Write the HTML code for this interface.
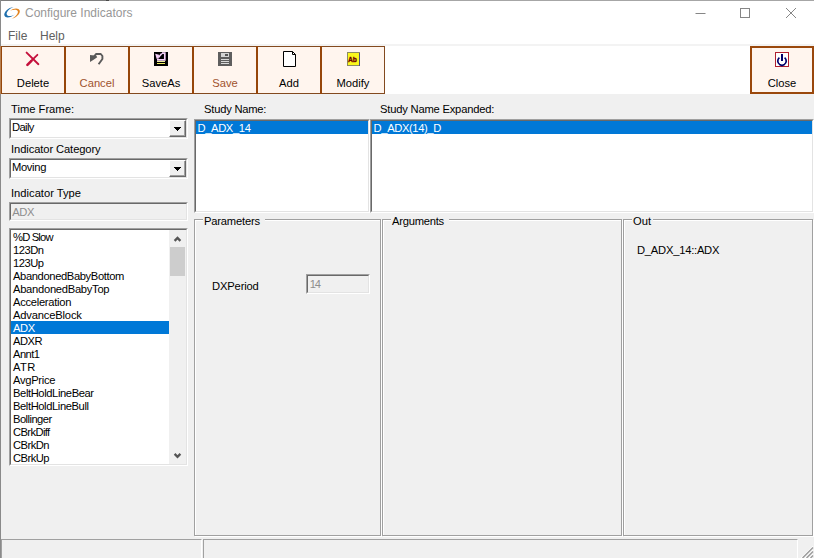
<!DOCTYPE html>
<html>
<head>
<meta charset="utf-8">
<title>Configure Indicators</title>
<style>
*{box-sizing:border-box;margin:0;padding:0}
html,body{width:814px;height:558px;overflow:hidden;background:#f0f0f0}
body{position:relative;font-family:"Liberation Sans",sans-serif;font-size:11.2px;color:#000}
.abs{position:absolute}
.t{position:absolute;white-space:nowrap;line-height:13px;height:13px}
#topb{left:0;top:0;width:814px;height:1px;background:linear-gradient(to right,#7c7c7c 0,#7c7c7c 106px,#484848 106px,#484848 109px,#a6a6a6 109px)}
#leftb{left:0;top:0;width:1px;height:558px;background:#8a8a8a}
#title{left:1px;top:1px;width:813px;height:26px;background:#fff}
#menu{left:1px;top:27px;width:813px;height:19px;background:#fff}
#tbar{left:1px;top:44px;width:813px;height:50px;background:#fff;border-top:2px solid #f3f3f3}
.tb{position:absolute;top:46px;width:64px;height:48px;background:#fff5ee;border:1px solid #834a1f}
.tb .lbl{position:absolute;left:0;width:62px;top:30px;text-align:center;line-height:13px}
.dis{color:#a0522d}
.sunk{position:absolute;background:#fff;border:1px solid;border-color:#a0a0a0 #fff #fff #a0a0a0}
.sunk>.in{position:absolute;left:0;top:0;right:0;bottom:0;border:1px solid;border-color:#696969 #e3e3e3 #e3e3e3 #696969}
.sel{position:absolute;background:#0078d7}
.grp{position:absolute;border:1px solid #a0a0a0;box-shadow:inset 1px 1px 0 #fff, 1px 1px 0 #fff}
.cap{position:absolute;top:215px;background:#f0f0f0;line-height:13px;height:13px;padding:0 2px 0 1px;white-space:nowrap}
.cbtn{position:absolute;width:17px;height:17px;background:#f0f0f0;border:1px solid;border-color:#fff #696969 #696969 #fff;box-shadow:inset -1px -1px 0 #a0a0a0, inset 1px 1px 0 #f0f0f0}
.cbtn i{position:absolute;left:7px;top:9px;width:1px;height:1px;background:#000;box-shadow:0 -1px 0 #000,-1px -1px 0 #000,1px -1px 0 #000,0 -2px 0 #000,-1px -2px 0 #000,1px -2px 0 #000,-2px -2px 0 #000,2px -2px 0 #000,0 -3px 0 #000,-1px -3px 0 #000,1px -3px 0 #000,-2px -3px 0 #000,2px -3px 0 #000,-3px -3px 0 #000,3px -3px 0 #000}
</style>
</head>
<body>
<div class="abs" id="title"></div>
<div class="abs" id="menu"></div>
<div class="abs" id="tbar"></div>
<div class="abs" id="topb"></div>
<div class="abs" id="leftb"></div>

<!-- title icon -->
<svg class="abs" style="left:0;top:0" width="24" height="24" viewBox="0 0 24 24">
  <path d="M13.6 7.0 C8.4 7.6 3.4 12.2 4.4 15.6 C5.4 18.4 10.4 18.0 14.8 14.4 C11.2 16.6 7.8 16.7 6.8 14.6 C5.9 12.3 9.2 8.8 13.6 7.0 Z" fill="#1f6fad"/>
  <path d="M10.2 10.6 C13.8 7.9 18.8 7.7 19.7 10.6 C20.5 13.7 16.5 17.6 11.6 19.1 C15 17.1 18.1 14 17.9 11.6 C17.5 9.2 14 9.2 10.2 10.6 Z" fill="#e2841f"/>
</svg>
<div class="t" style="left:25px;top:6px;font-size:12px;line-height:14px;height:14px;color:#979797">Configure Indicators</div>
<svg class="abs" style="left:690px;top:4px" width="120" height="20" viewBox="0 0 120 20">
  <path d="M5.5 9.5 H15.5" stroke="#868686" stroke-width="1" fill="none"/>
  <rect x="50.5" y="4.5" width="9" height="9" stroke="#868686" stroke-width="1" fill="none"/>
  <path d="M96 4 L106 14 M106 4 L96 14" stroke="#868686" stroke-width="1" fill="none"/>
</svg>
<div class="t" style="left:8px;top:29px;font-size:12px;line-height:14px;height:14px;color:#606060">File</div>
<div class="t" style="left:40px;top:29px;font-size:12px;line-height:14px;height:14px;color:#606060">Help</div>

<!-- toolbar -->
<div class="abs" style="left:0;top:46px;width:1px;height:48px;background:#b88050"></div>
<div class="tb" style="left:1px"><div class="lbl">Delete</div></div>
<div class="tb" style="left:65px"><div class="lbl dis">Cancel</div></div>
<div class="tb" style="left:129px"><div class="lbl">SaveAs</div></div>
<div class="tb" style="left:193px"><div class="lbl dis">Save</div></div>
<div class="tb" style="left:257px"><div class="lbl">Add</div></div>
<div class="tb" style="left:321px"><div class="lbl">Modify</div></div>
<div class="abs" style="left:64px;top:46px;width:2px;height:48px;background:#96460a"></div>
<div class="abs" style="left:128px;top:46px;width:2px;height:48px;background:#96460a"></div>
<div class="abs" style="left:192px;top:46px;width:2px;height:48px;background:#96460a"></div>
<div class="abs" style="left:256px;top:46px;width:2px;height:48px;background:#96460a"></div>
<div class="abs" style="left:320px;top:46px;width:2px;height:48px;background:#96460a"></div>
<div class="abs" style="left:1px;top:46px;width:1px;height:48px;background:#96460a"></div>
<div class="tb" style="left:750px;border:2px solid #9a480c"><div class="lbl" style="left:-1px;top:29px">Close</div></div>
<svg class="abs" style="left:0;top:46px" width="814" height="48" viewBox="0 46 814 48">
  <!-- delete X -->
  <path d="M26.6 52.6 L38.4 64.2" stroke="#c4103c" stroke-width="1.9" fill="none" stroke-linecap="round"/>
  <path d="M37.4 54.8 L31 61.2" stroke="#c4103c" stroke-width="1.8" fill="none" stroke-linecap="round"/>
  <path d="M31.4 60.8 L27.4 64.8" stroke="#c4103c" stroke-width="2.6" fill="none" stroke-linecap="round"/>
  <!-- cancel / undo -->
  <path d="M90 54.9 L90 62.1 L93.6 59.7 L97.2 57.3 L96 55.2 L94.4 55.6 Z" fill="#5a5a5a"/>
  <path d="M94 56.6 L96 54 L100.8 54 L102.4 56 L102.4 59 L98.6 64.2" stroke="#5a5a5a" stroke-width="1.9" fill="none" stroke-linejoin="round"/>
  <!-- save as -->
  <rect x="154" y="52" width="14" height="14" fill="#000"/>
  <path d="M155.2 53.8 L159 54.8 L158.6 58.8 L156.6 58.8 Z" fill="#f6d0f8"/>
  <path d="M158.4 57.6 L161.8 53.6" stroke="#f6d0f8" stroke-width="1.6" fill="none"/>
  <path d="M162 53.2 H164.8 V59.8 H157" stroke="#f6d0f8" stroke-width="1.7" fill="none"/>
  <rect x="157" y="61" width="8" height="1" fill="#ecec9c"/>
  <rect x="157" y="63" width="8" height="1" fill="#f0f060"/>
  <!-- save (disabled) -->
  <rect x="218" y="52" width="14" height="14" fill="#5e5e5e"/>
  <rect x="221" y="53" width="8" height="4" fill="#d4d4d4"/>
  <rect x="225" y="54" width="3" height="2" fill="#555"/>
  <rect x="221" y="59" width="8" height="1" fill="#d8d8d8"/>
  <rect x="221" y="61" width="8" height="1" fill="#d8d8d8"/>
  <rect x="221" y="63" width="8" height="1" fill="#d8d8d8"/>
  <!-- add -->
  <path d="M283.5 51.5 H292.5 L295.5 54.5 V66.5 H283.5 Z" fill="#fff" stroke="#000" stroke-width="1"/>
  <path d="M292.5 51.5 V54.5 H295.5" fill="none" stroke="#000" stroke-width="1"/>
  <!-- modify -->
  <rect x="347.5" y="52.5" width="12" height="13" fill="#fbf71c" stroke="#8c8c60" stroke-width="1"/>
  <rect x="359" y="53" width="1" height="13" fill="#50507a"/>
  <text x="348" y="61.8" font-family="Liberation Sans" font-weight="bold" font-size="7.8" fill="#700000" stroke="#700000" stroke-width="0.35" textLength="9" lengthAdjust="spacingAndGlyphs">Ab</text>
  <!-- close -->
  <rect x="775.5" y="52.5" width="13" height="14" fill="#fff" stroke="#b02030" stroke-width="1"/>
  <rect x="781" y="54" width="2" height="7" fill="#00006c"/>
  <path d="M779.4 57.6 C777 59.6 777.4 63 779.6 64.4 L782 65.6 L784.4 64.4 C786.6 63 787 59.6 784.6 57.6" fill="none" stroke="#00006c" stroke-width="1.7"/>
</svg>

<!-- left panel -->
<div class="t" style="left:11px;top:103px">Time Frame:</div>
<div class="sunk" style="left:9px;top:118px;width:179px;height:21px"><div class="in"></div>
  <div class="t" style="left:2px;top:2px;letter-spacing:-0.6px">Daily</div>
  <div class="cbtn" style="left:159px;top:1px"><i></i></div>
</div>
<div class="t" style="left:11px;top:143px;letter-spacing:-0.1px">Indicator Category</div>
<div class="sunk" style="left:9px;top:158px;width:179px;height:21px"><div class="in"></div>
  <div class="t" style="left:2px;top:2px;letter-spacing:-0.34px">Moving</div>
  <div class="cbtn" style="left:159px;top:1px"><i></i></div>
</div>
<div class="t" style="left:11px;top:187px">Indicator Type</div>
<div class="sunk" style="left:9px;top:202px;width:179px;height:19px;background:#f0f0f0"><div class="in"></div>
  <div class="t" style="left:2.3px;top:3px;color:#8e8e8e;letter-spacing:-0.45px">ADX</div>
</div>

<!-- indicator list -->
<div class="sunk" style="left:9px;top:228px;width:179px;height:238px"><div class="in"></div></div>
<div class="t" style="left:13px;top:231px;letter-spacing:-0.82px">%D Slow</div>
<div class="t" style="left:13px;top:244px;letter-spacing:-0.47px">123Dn</div>
<div class="t" style="left:13px;top:257px;letter-spacing:-0.47px">123Up</div>
<div class="t" style="left:13px;top:270px;letter-spacing:-0.38px">AbandonedBabyBottom</div>
<div class="t" style="left:13px;top:283px;letter-spacing:-0.28px">AbandonedBabyTop</div>
<div class="t" style="left:13px;top:296px;letter-spacing:-0.29px">Acceleration</div>
<div class="t" style="left:13px;top:309px;letter-spacing:-0.18px">AdvanceBlock</div>
<div class="sel" style="left:11px;top:321px;width:158px;height:13px"></div>
<div class="t" style="left:13px;top:322px;color:#fff;letter-spacing:-0.40px">ADX</div>
<div class="t" style="left:13px;top:335px;letter-spacing:-0.53px">ADXR</div>
<div class="t" style="left:13px;top:348px;letter-spacing:-0.55px">Annt1</div>
<div class="t" style="left:13px;top:361px;letter-spacing:0.35px">ATR</div>
<div class="t" style="left:13px;top:374px;letter-spacing:-0.31px">AvgPrice</div>
<div class="t" style="left:13px;top:387px;letter-spacing:-0.40px">BeltHoldLineBear</div>
<div class="t" style="left:13px;top:400px;letter-spacing:-0.41px">BeltHoldLineBull</div>
<div class="t" style="left:13px;top:413px;letter-spacing:-0.54px">Bollinger</div>
<div class="t" style="left:13px;top:426px;letter-spacing:-0.61px">CBrkDiff</div>
<div class="t" style="left:13px;top:439px;letter-spacing:-0.54px">CBrkDn</div>
<div class="t" style="left:13px;top:452px;letter-spacing:-0.54px">CBrkUp</div>

<div class="abs" style="left:169px;top:230px;width:17px;height:234px;background:#f0f0f0"></div>
<div class="abs" style="left:170px;top:247px;width:15px;height:29px;background:#cdcdcd"></div>
<svg class="abs" style="left:169px;top:230px" width="17" height="234" viewBox="0 0 17 234">
  <path d="M5.6 10.9 L8.5 8.0 L11.4 10.9" fill="none" stroke="#555" stroke-width="2.3"/>
  <path d="M5.6 223.9 L8.5 226.8 L11.4 223.9" fill="none" stroke="#555" stroke-width="2.3"/>
</svg>

<!-- study name -->
<div class="t" style="left:204px;top:103px;letter-spacing:-0.22px">Study Name:</div>
<div class="sunk" style="left:194px;top:119px;width:176px;height:94px"><div class="in"></div></div>
<div class="sel" style="left:196px;top:121px;width:172px;height:13px"></div>
<div class="t" style="left:197.5px;top:122px;color:#fff;letter-spacing:-0.37px">D_ADX_14</div>
<div class="t" style="left:380px;top:103px;letter-spacing:-0.2px">Study Name Expanded:</div>
<div class="sunk" style="left:370px;top:119px;width:444px;height:94px"><div class="in"></div></div>
<div class="sel" style="left:372px;top:121px;width:440px;height:13px"></div>
<div class="t" style="left:373.6px;top:122px;color:#fff;letter-spacing:-0.38px">D_ADX(14)_D</div>

<!-- groups -->
<div class="grp" style="left:194px;top:219px;width:187px;height:317px"></div>
<div class="grp" style="left:382px;top:219px;width:240px;height:317px"></div>
<div class="grp" style="left:623px;top:219px;width:190px;height:317px"></div>
<div class="cap" style="left:203px;width:62px;letter-spacing:-0.2px">Parameters</div>
<div class="cap" style="left:391px;width:58px;letter-spacing:-0.24px">Arguments</div>
<div class="cap" style="left:632px;width:21px">Out</div>

<div class="t" style="left:212px;top:280px;letter-spacing:-0.15px">DXPeriod</div>
<div class="sunk" style="left:306px;top:274px;width:64px;height:20px;background:#f0f0f0"><div class="in"></div>
  <div class="t" style="left:2.8px;top:3px;color:#8e8e8e;letter-spacing:-1.2px">14</div>
</div>
<div class="t" style="left:637px;top:244px;letter-spacing:-0.23px">D_ADX_14::ADX</div>

<!-- status bar -->
<div class="abs" style="left:1px;top:539px;width:201px;height:24px;border:1px solid;border-color:#a0a0a0 #fff #fff #a0a0a0"></div>
<div class="abs" style="left:203px;top:539px;width:595px;height:24px;border:1px solid;border-color:#a0a0a0 #fff #fff #a0a0a0"></div>
<svg class="abs" style="left:798px;top:542px" width="16" height="16" viewBox="0 0 16 16">
  <path d="M3.3 16 L15 4.3 M7.3 16 L15 8.3 M11.3 16 L15 12.3" stroke="#fff" stroke-width="1.2" fill="none"/>
  <path d="M4.5 16 L15 5.5 M8.5 16 L15 9.5 M12.5 16 L15 13.5" stroke="#9a9a9a" stroke-width="1.4" fill="none"/>
</svg>
</body>
</html>
